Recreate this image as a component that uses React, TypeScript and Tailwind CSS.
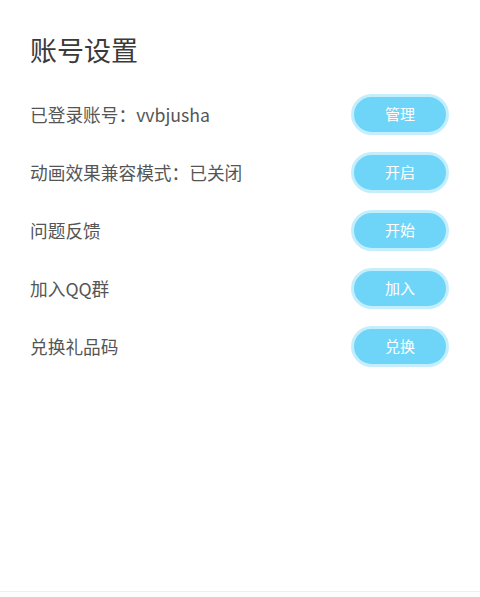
const rows = [
  { label: "已登录账号：vvbjusha", action: "管理" },
  { label: "动画效果兼容模式：已关闭", action: "开启" },
  { label: "问题反馈", action: "开始" },
  { label: "加入QQ群", action: "加入" },
  { label: "兑换礼品码", action: "兑换" },
];

export default function App() {
  return (
    <div
      className="h-[597px] w-[480px] bg-white flex flex-col"
      style={{ fontFamily: '"Noto Sans CJK SC", "Noto Sans", sans-serif' }}
    >
      <div className="flex-1 px-[30px] pt-[31px]">
        <h1 className="text-[27px] leading-[38px] text-[#3a3a3a]">账号设置</h1>
        <div className="mt-[25px] flex flex-col gap-[17px]">
          {rows.map((row) => (
            <div key={row.label} className="flex items-center justify-between pr-[1px]">
              <span className="text-[17.7px] text-[#555]">{row.label}</span>
              <button className="h-[41px] w-[98px] rounded-full border-[3px] border-[#c4eefc] bg-[#6fd5f8] text-[15px] text-white">
                {row.action}
              </button>
            </div>
          ))}
        </div>
      </div>
      <div className="h-[6px] border-t border-[#eeeeee] bg-[#fdfdfd]" />
    </div>
  );
}
